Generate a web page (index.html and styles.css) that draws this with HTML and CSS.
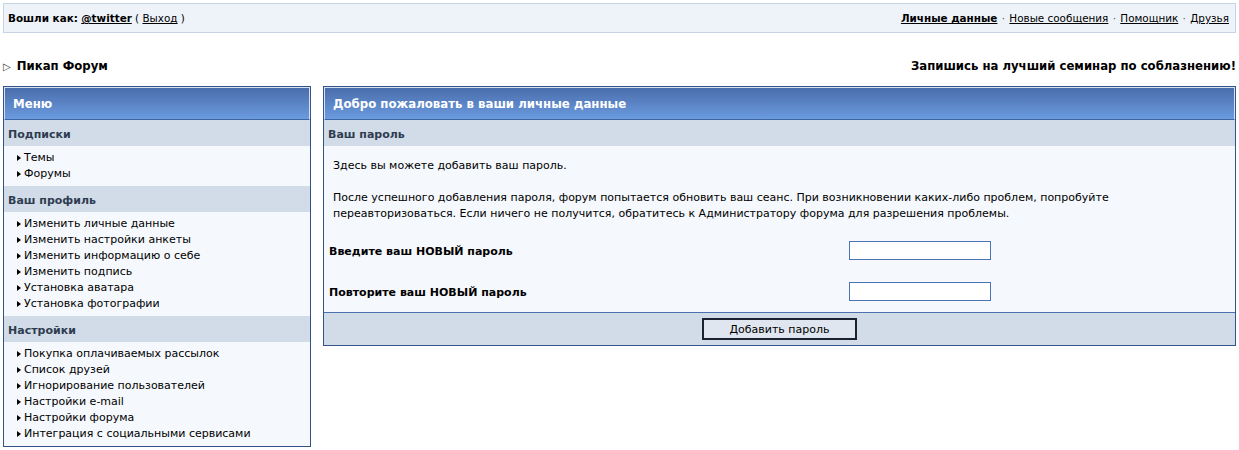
FILE: index.html
```html
<!DOCTYPE html>
<html lang="ru">
  <head>
    <meta charset="UTF-8" />
    <title>Пикап Форум - Личные данные</title>
    <link rel="stylesheet" href="styles.css">
  </head>
  <body>
    <div class="page">
      <div class="userbar">
        <div class="userbar-left">
          <b>Вошли как:</b> <a href="#" class="strong">@twitter</a> ( <a href="#">Выход</a> )
        </div>
        <div class="userbar-right">
          <a href="#" class="strong">Личные данные</a>
          <span class="dot">&middot;</span>
          <a href="#">Новые сообщения</a>
          <span class="dot">&middot;</span>
          <a href="#">Помощник</a>
          <span class="dot">&middot;</span>
          <a href="#">Друзья</a>
        </div>
      </div>

      <div class="titlebar">
        <div class="site-name"><span class="arrow">&#9655;</span> Пикап Форум</div>
        <div class="promo">Запишись на лучший семинар по соблазнению!</div>
      </div>

      <div class="main">
        <div class="box menu">
          <div class="box-head">Меню</div>

          <div class="box-sub">Подписки</div>
          <ul class="links">
            <li><a href="#">Темы</a></li>
            <li><a href="#">Форумы</a></li>
          </ul>

          <div class="box-sub">Ваш профиль</div>
          <ul class="links">
            <li><a href="#">Изменить личные данные</a></li>
            <li><a href="#">Изменить настройки анкеты</a></li>
            <li><a href="#">Изменить информацию о себе</a></li>
            <li><a href="#">Изменить подпись</a></li>
            <li><a href="#">Установка аватара</a></li>
            <li><a href="#">Установка фотографии</a></li>
          </ul>

          <div class="box-sub">Настройки</div>
          <ul class="links">
            <li><a href="#">Покупка оплачиваемых рассылок</a></li>
            <li><a href="#">Список друзей</a></li>
            <li><a href="#">Игнорирование пользователей</a></li>
            <li><a href="#">Настройки e-mail</a></li>
            <li><a href="#">Настройки форума</a></li>
            <li><a href="#">Интеграция с социальными сервисами</a></li>
          </ul>
        </div>

        <form class="box content" onsubmit="return false">
          <div class="box-head">Добро пожаловать в ваши личные данные</div>
          <div class="box-sub">Ваш пароль</div>
          <div class="box-body">
            <div class="intro">
              <p>Здесь вы можете добавить ваш пароль.</p>
              <p>После успешного добавления пароля, форум попытается обновить ваш сеанс. При возникновении каких-либо проблем, попробуйте переавторизоваться. Если ничего не получится, обратитесь к Администратору форума для разрешения проблемы.</p>
            </div>
            <div class="form-row">
              <label for="newpass">Введите ваш НОВЫЙ пароль</label>
              <input type="password" id="newpass" />
            </div>
            <div class="form-row">
              <label for="newpass2">Повторите ваш НОВЫЙ пароль</label>
              <input type="password" id="newpass2" />
            </div>
          </div>
          <div class="box-foot">
            <button type="submit">Добавить пароль</button>
          </div>
        </form>
      </div>
    </div>
  </body>
</html>
```

FILE: styles.css
```css
body {
  margin: 0;
  padding: 0;
  background: #fff;
  color: #000;
  font-family: "DejaVu Sans", Verdana, sans-serif;
  font-size: 11px;
}

a {
  color: #000;
  text-decoration: underline;
}

a.strong {
  font-weight: bold;
}

.page {
  padding: 3px;
}

/* top user bar */
.userbar {
  display: flex;
  justify-content: space-between;
  align-items: center;
  height: 28px;
  padding: 0 6px 0 4px;
  background: #eef3f9;
  border: 1px solid #c5d3e4;
  font-size: 10.4px;
}

.userbar-right .dot {
  color: #555;
  margin: 0 1px;
}

/* title row */
.titlebar {
  display: flex;
  justify-content: space-between;
  align-items: center;
  height: 22px;
  margin-top: 22px;
  margin-bottom: 9px;
  font-size: 11.7px;
  font-weight: bold;
}

.site-name .arrow {
  font-size: 10px;
  font-weight: normal;
  color: #333;
  margin-right: 2px;
}

.main {
  display: flex;
  align-items: flex-start;
  gap: 12px;
}

/* boxes */
.box {
  border: 1px solid #345487;
  background: #f5f8fc;
  margin: 0;
}

.menu {
  width: 306px;
  flex-shrink: 0;
}

.content {
  flex: 1;
}

.box-head {
  box-sizing: border-box;
  height: 33px;
  padding: 2px 0 0 8px;
  line-height: 29px;
  border: 1px solid #d6e2f2;
  border-bottom: 1px solid #3f66a2;
  background: linear-gradient(to bottom, #4a6dab, #6b9be0);
  color: #fff;
  font-size: 11.75px;
  font-weight: bold;
}

.box-sub {
  box-sizing: border-box;
  height: 26px;
  padding: 5px 0 0 4px;
  line-height: 20px;
  background: #d1dce8;
  color: #2f3c50;
  font-weight: bold;
}

.links {
  list-style: none;
  margin: 0;
  padding: 4px 0 4px 12px;
}

.links li {
  line-height: 16px;
  padding-left: 8px;
  position: relative;
}

.links li::before {
  content: "";
  position: absolute;
  left: 1px;
  top: 5px;
  border-left: 4px solid #000;
  border-top: 3px solid transparent;
  border-bottom: 3px solid transparent;
}

.links a {
  text-decoration: none;
}

/* content panel */
.box-body {
  padding: 0 5px;
}

.intro {
  padding: 12px 4px 8px;
  line-height: 16px;
}

.intro p {
  margin: 0 0 16px;
}

.intro p:last-child {
  margin-bottom: 0;
}

.form-row {
  display: grid;
  grid-template-columns: 520px 1fr;
  align-items: center;
  height: 41px;
}

.form-row label {
  font-weight: bold;
  padding-top: 2px;
}

.form-row input {
  width: 142px;
  height: 19px;
  box-sizing: border-box;
  border: 1px solid #4a74b5;
  background: #fff;
  padding: 1px 3px;
  font-size: 11px;
}

.box-foot {
  display: flex;
  justify-content: center;
  height: 32px;
  align-items: center;
  background: #d1dce8;
  border-top: 1px solid #4a72b0;
}

button {
  width: 155px;
  height: 22px;
  border: 2px solid #1b2330;
  background: #dfe6ef;
  color: #000;
  font-family: "DejaVu Sans", Verdana, sans-serif;
  font-size: 11px;
  cursor: pointer;
}
```
